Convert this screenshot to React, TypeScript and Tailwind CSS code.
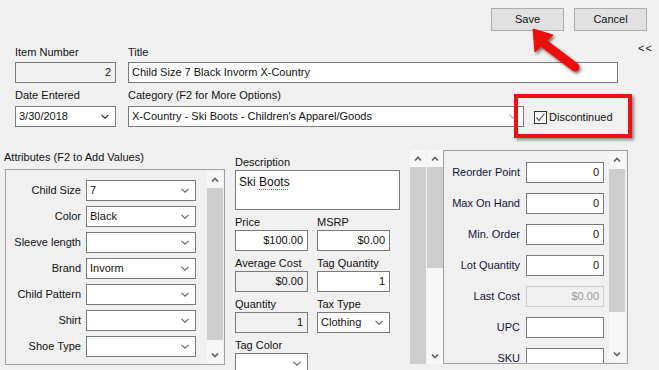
import React from 'react';

const Chevron = ({ className = 'text-[#606060]' }: { className?: string }) => (
  <svg width="8" height="5" viewBox="0 0 8 5" className={className}>
    <path d="M0.5 0.8 L4 4.2 L7.5 0.8" fill="none" stroke="currentColor" strokeWidth="1.1" />
  </svg>
);

const Caret = ({ down = false }: { down?: boolean }) => (
  <svg width="8" height="6" viewBox="0 0 8 6" className="text-[#606060]">
    <path
      d={down ? 'M1 1.5 L4 4.5 L7 1.5' : 'M1 4.5 L4 1.5 L7 4.5'}
      fill="none"
      stroke="currentColor"
      strokeWidth="1.6"
    />
  </svg>
);

const Box = ({
  value = '',
  className = '',
  disabled = false,
  left = false,
}: {
  value?: string;
  className?: string;
  disabled?: boolean;
  left?: boolean;
}) => (
  <div
    className={`h-[21px] border flex items-center px-[4px] whitespace-nowrap ${
      disabled ? 'bg-[#f0f0f0] border-[#7a7a7a]' : 'bg-white border-[#7a7a7a]'
    } ${left ? 'justify-start pl-[3px]' : 'justify-end'} ${className}`}
  >
    {value}
  </div>
);

const Combo = ({
  value = '',
  className = '',
  chevron,
}: {
  value?: string;
  className?: string;
  chevron?: string;
}) => (
  <div className={`h-[21px] border border-[#7a7a7a] bg-white flex items-center pl-[3px] pr-[6px] ${className}`}>
    <span className="flex-1 truncate">{value}</span>
    <Chevron className={chevron} />
  </div>
);

const ScrollBar = ({
  className = '',
  thumb = '',
  showDown = true,
}: {
  className?: string;
  thumb?: string;
  showDown?: boolean;
}) => (
  <div className={`w-[16px] flex flex-col bg-[#f7f7f7] shrink-0 ${className}`}>
    <div className="h-[17px] flex items-center justify-center">
      <Caret />
    </div>
    <div className="flex-1 flex flex-col">
      <div className={`bg-[#cdcdcd] ${thumb}`} />
    </div>
    {showDown && (
      <div className="h-[17px] flex items-center justify-center">
        <Caret down />
      </div>
    )}
  </div>
);

const Label = ({ children }: { children: React.ReactNode }) => (
  <div className="h-[15px] leading-[15px] whitespace-nowrap">{children}</div>
);

const attributes = [
  { label: 'Child Size', value: '7' },
  { label: 'Color', value: 'Black' },
  { label: 'Sleeve length', value: '' },
  { label: 'Brand', value: 'Invorm' },
  { label: 'Child Pattern', value: '' },
  { label: 'Shirt', value: '' },
  { label: 'Shoe Type', value: '' },
];

const reorder = [
  { label: 'Reorder Point', value: '0' },
  { label: 'Max On Hand', value: '0' },
  { label: 'Min. Order', value: '0' },
  { label: 'Lot Quantity', value: '0' },
  { label: 'Last Cost', value: '$0.00', disabled: true },
  { label: 'UPC', value: '' },
  { label: 'SKU', value: '' },
];

const Field = ({ label, children }: { label: string; children: React.ReactNode }) => (
  <div className="pt-[5px] w-[73px]">
    <Label>{label}</Label>
    {children}
  </div>
);

export default function App() {
  return (
    <div className="relative w-[659px] h-[370px] overflow-hidden bg-[#f0f0f0] text-[11px] text-[#111] font-['Liberation_Sans',Arial,sans-serif]">
      {/* buttons */}
      <div className="flex justify-end gap-[10px] pt-[8px] pr-[12px]">
        <button className="w-[73px] h-[23px] border border-[#adadad] bg-[#e1e1e1] text-[11px]">Save</button>
        <button className="w-[73px] h-[23px] border border-[#adadad] bg-[#e1e1e1] text-[11px]">Cancel</button>
      </div>

      {/* item number / title */}
      <div className="flex pl-[15px] mt-[14px]">
        <div className="w-[101px]">
          <div className="h-[17px] leading-[15px]">Item Number</div>
          <Box value="2" disabled className="h-[20px]" />
        </div>
        <div className="ml-[12px] w-[490px]">
          <div className="h-[17px] leading-[15px]">Title</div>
          <Box value="Child Size 7 Black Invorm X-Country" left className="h-[20px]" />
        </div>
        <div className="ml-[20px] -mt-[4px] leading-[15px] tracking-[1px]">&lt;&lt;</div>
      </div>

      {/* date / category / discontinued */}
      <div className="flex pl-[15px] mt-[5px]">
        <div className="w-[101px]">
          <div className="h-[18px] leading-[15px]">Date Entered</div>
          <Combo value="3/30/2018" chevron="text-[#222]" />
        </div>
        <div className="ml-[12px] w-[396px]">
          <div className="h-[18px] leading-[15px]">Category (F2 for More Options)</div>
          <Combo value="X-Country - Ski Boots - Children's Apparel/Goods" chevron="text-[#b0b0b0]" />
        </div>
        <div className="ml-[10px] mt-[23px] flex items-start gap-[2px]">
          <div className="w-[13px] h-[13px] border border-[#333] bg-white flex items-center justify-center">
            <svg width="11" height="11" viewBox="0 0 11 11">
              <path d="M1.5 5.5 L4 8.5 L9.5 1.5" fill="none" stroke="#555" strokeWidth="1.2" />
            </svg>
          </div>
          <span className="leading-[13px]">Discontinued</span>
        </div>
      </div>

      {/* lower section */}
      <div className="flex mt-[23px] h-[214px]">
        {/* attributes */}
        <div className="pl-[4px]">
          <div className="h-[19px] leading-[15px]">Attributes (F2 to Add Values)</div>
          <div className="ml-[1px] w-[220px] h-[196px] border border-[#a0a0a0] flex">
            <div className="flex flex-col gap-[5px] pt-[10px]">
              {attributes.map((a) => (
                <div key={a.label} className="flex items-center gap-[5px]">
                  <div className="w-[75px] text-right whitespace-nowrap">{a.label}</div>
                  <Combo value={a.value} className="w-[110px]" />
                </div>
              ))}
            </div>
            <ScrollBar className="ml-[11px] my-[1px]" thumb="h-[152px]" />
          </div>
        </div>

        {/* description column */}
        <div className="ml-[10px] w-[165px]">
          <div className="pt-[5px]">
            <Label>Description</Label>
            <div className="h-[40px] border border-[#7a7a7a] bg-white px-[3px] pt-[4px] text-[12px] leading-[15px]">
              Ski{' '}
              <span className="underline decoration-dotted decoration-[#e04040] underline-offset-[3px]">Boots</span>
            </div>
          </div>
          <div className="flex gap-[9px]">
            <Field label="Price">
              <Box value="$100.00" />
            </Field>
            <Field label="MSRP">
              <Box value="$0.00" />
            </Field>
          </div>
          <div className="flex gap-[9px]">
            <Field label="Average Cost">
              <Box value="$0.00" disabled />
            </Field>
            <Field label="Tag Quantity">
              <Box value="1" />
            </Field>
          </div>
          <div className="flex gap-[9px]">
            <Field label="Quantity">
              <Box value="1" disabled />
            </Field>
            <Field label="Tax Type">
              <Combo value="Clothing" />
            </Field>
          </div>
          <div className="flex gap-[9px]">
            <Field label="Tag Color">
              <Combo value="" />
            </Field>
          </div>
        </div>

        <ScrollBar className="ml-[10px]" thumb="flex-1" showDown={false} />
        <ScrollBar className="ml-[1px]" thumb="h-[101px]" />

        {/* reorder panel */}
        <div className="w-[185px] h-[214px] border border-[#a0a0a0] flex overflow-hidden">
          <div className="flex flex-col gap-[10px] pt-[11px]">
            {reorder.map((r) => (
              <div key={r.label} className="flex items-center gap-[6px]">
                <div className="w-[76px] text-right whitespace-nowrap text-[#14143a]">{r.label}</div>
                {r.disabled ? (
                  <div className="w-[78px] h-[21px] border border-[#cccccc] bg-[#f0f0f0] flex items-center justify-end px-[4px] text-[#9a9a9a]">
                    {r.value}
                  </div>
                ) : (
                  <Box value={r.value} className="w-[78px]" />
                )}
              </div>
            ))}
          </div>
          <ScrollBar className="ml-[5px] mb-[1px]" thumb="mt-[1px] h-[143px]" />
        </div>
      </div>

      {/* annotation: red box */}
      <div className="absolute left-[514px] top-[94px] w-[118px] h-[44px] border-[4px] border-[#ee1111] shadow-[2px_2px_3px_rgba(0,0,0,0.45)]" />

      {/* annotation: red arrow */}
      <svg className="absolute left-0 top-0" width="659" height="370" viewBox="0 0 659 370">
        <defs>
          <filter id="sh" x="-20%" y="-20%" width="150%" height="150%">
            <feDropShadow dx="1.5" dy="2" stdDeviation="1.5" floodColor="#000" floodOpacity="0.55" />
          </filter>
        </defs>
        <g filter="url(#sh)" fill="#ee1111" stroke="#ee1111">
          <line x1="544" y1="43.5" x2="575" y2="67" strokeWidth="9" strokeLinecap="round" />
          <polygon points="533,29 553,35 535,52" strokeWidth="1" strokeLinejoin="round" />
        </g>
      </svg>
    </div>
  );
}
